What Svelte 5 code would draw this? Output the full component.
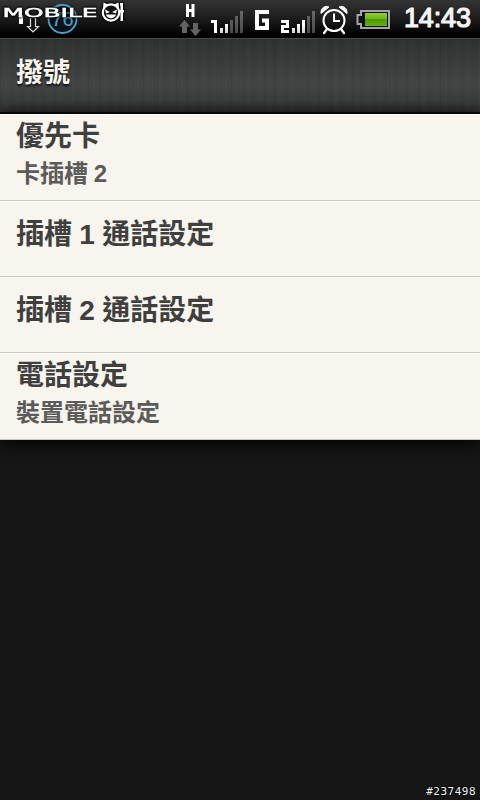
<script>
  const time = '14:43'
  const stamp = '#237498'

  const rows = [
    { title: '優先卡', summary: '卡插槽 2' },
    { title: '插槽 1 通話設定' },
    { title: '插槽 2 通話設定' },
    { title: '電話設定', summary: '裝置電話設定' },
  ]

  // level = how many of the five bars are lit
  const signals = {
    sim1: { slot: '1', level: 2, offset: 10 },
    sim2: { slot: '2', level: 3, offset: 12 },
  }
  const barHeights = [5, 9, 13, 17, 22]
</script>

{#snippet signal(s)}
  <svg class="signal" width="36" height="38" viewBox="0 0 36 38">
    {#if s.slot === '1'}
      <path d="M1 21.500H5.500V33" fill="none" stroke="#fff" stroke-width="3" />
    {:else}
      <path d="M1 21.500H7.500V26.500H2.500V31.500H9" fill="none" stroke="#fff" stroke-width="3" />
    {/if}
    {#each barHeights as h, i}
      <rect
        x={s.offset + i * 5} y={33 - h} width="3" height={h}
        fill={i < s.level ? 'url(#lit)' : 'url(#dim)'}
      />
    {/each}
  </svg>
{/snippet}

<div class="screen">
  <div class="statusbar">
    <svg class="notices" width="80" height="38" viewBox="0 0 80 38">
      <path d="M19 15h4v9h-4z" fill="#fff" />
      <path d="M30.500 18v8.500h-3l5.500 5.500 5.500-5.500h-3V18" fill="#111" stroke="#ddd" stroke-width="1.200" />
      <circle cx="62.500" cy="19" r="14" fill="#0a1217" stroke="#4ba3cf" stroke-width="1.800" />
      <text x="62.500" y="26" text-anchor="middle" class="badge">76</text>
    </svg>

    <svg class="data" width="24" height="38" viewBox="0 0 24 38">
      <path d="M9.500 4v13M15 4v13M9 10.500h6" stroke="#fff" stroke-width="3" />
      <path d="M6.500 20l5.500 6.500h-3V33H4v-6.500H1zM15 23h5v6.500h3L17.500 36 12 29.500h3z" fill="#646464" />
    </svg>

    {@render signal(signals.sim1)}

    <svg class="network" width="16" height="38" viewBox="0 0 16 38">
      <path d="M15 12H3V28H13V20.500H8" fill="none" stroke="#fff" stroke-width="4" />
    </svg>

    {@render signal(signals.sim2)}

    <svg class="alarm" width="28" height="38" viewBox="0 0 28 38" fill="none" stroke="#fff">
      <circle cx="14" cy="20.500" r="10.500" stroke-width="2" />
      <path d="M14 13.500V21h6" stroke-width="2" />
      <path d="M7 29l-3 4M21 29l3 4" stroke-width="2.200" stroke-linecap="round" />
      <path d="M1 13.500C.5 8 5 5 9 7zM27 13.500C27.500 8 23 5 19 7z" fill="#fff" stroke-width="1" />
    </svg>

    <svg class="battery" width="35" height="38" viewBox="0 0 35 38">
      <path d="M5 11h28v17H5v-4H1.500v-9H5z" fill="#111" stroke="#a5a5a5" stroke-width="2" />
      <path d="M9 13h22v13H9z" fill="url(#charge)" />
    </svg>

    <svg class="clock" width="70" height="38" viewBox="0 0 70 38">
      <text x="0" y="27" textLength="67" lengthAdjust="spacing">{time}</text>
    </svg>

    <svg class="defs" width="0" height="0">
      <defs>
        <linearGradient id="lit" gradientUnits="userSpaceOnUse" x1="0" y1="11" x2="0" y2="33">
          <stop offset="0.6" stop-color="#fff" />
          <stop offset="1" stop-color="#d0d0d0" />
        </linearGradient>
        <linearGradient id="dim" gradientUnits="userSpaceOnUse" x1="0" y1="11" x2="0" y2="33">
          <stop offset="0" stop-color="#686868" />
          <stop offset="1" stop-color="#4a4a4a" />
        </linearGradient>
        <linearGradient id="charge" x1="0" y1="0" x2="0" y2="1">
          <stop offset="0" stop-color="#8ccb31" />
          <stop offset="0.45" stop-color="#6fb81c" />
          <stop offset="0.5" stop-color="#4c9d05" />
          <stop offset="1" stop-color="#67b013" />
        </linearGradient>
      </defs>
    </svg>

    <svg class="watermark" width="128" height="26" viewBox="0 0 128 26">
      <text x="2.500" y="17" textLength="95" lengthAdjust="spacingAndGlyphs">MOBILE</text>
      <circle cx="111" cy="12.500" r="8.200" fill="#111" stroke="#fff" stroke-width="2.200" />
      <path d="M103 8.500l.5-6 4.500 2zM119 8.500l-.5-6-4.500 2z" fill="#fff" />
      <path d="M105 9.500l5 2.500-4 1.500zM117 9.500l-5 2.500 4 1.500z" fill="#fff" />
      <path d="M106 14.500h10c-1.200 5-8.800 5-10 0z" fill="#fff" />
      <path d="M120 3h3v7h1v2.500h-1V21h-2.500v-8.500H120V10h.5V5.500H120z" fill="#fff" />
    </svg>
  </div>

  <header>
    <h1>撥號</h1>
  </header>

  <ul class="list">
    {#each rows as row}
      <li class:double={row.summary}>
        <div class="title">{row.title}</div>
        {#if row.summary}<div class="summary">{row.summary}</div>{/if}
      </li>
    {/each}
  </ul>

  <div class="stamp">{stamp}</div>
</div>

<style>
  :global(body) {
    background: #161616;
  }
  .screen {
    position: relative;
    display: flex;
    flex-direction: column;
    width: 480px;
    height: 800px;
    overflow: hidden;
    background: #161616;
    font-family: "Liberation Sans", "Noto Sans CJK TC", sans-serif;
  }
  .statusbar {
    position: relative;
    display: flex;
    flex-shrink: 0;
    height: 38px;
    background: linear-gradient(#343434, #1b1b1b 50%, #000 94%);
  }
  .statusbar svg {
    display: block;
    flex-shrink: 0;
  }
  .badge {
    font: 20px "Liberation Sans", sans-serif;
    fill: #4ba3cf;
  }
  .data { margin-left: 98px; }
  .signal { margin-left: 8px; }
  .network { margin-left: 8px; }
  .network + .signal { margin-left: 10px; }
  .alarm { margin-left: 4px; }
  .battery { margin-left: 8px; }
  .clock { margin-left: 13px; }
  .clock text {
    font: 27px "Liberation Sans", sans-serif;
    fill: #f4f4f4;
    stroke: #f4f4f4;
    stroke-width: 1.2px;
    stroke-linejoin: round;
  }
  .statusbar .defs { position: absolute; }
  .watermark {
    position: absolute;
    left: 0;
    top: 0;
    filter: drop-shadow(0 0 1px #000) drop-shadow(0 0 1px #000);
  }
  .watermark text {
    font: 12.5px "DejaVu Sans", sans-serif;
    fill: #fff;
    stroke: #fff;
    stroke-width: .5px;
  }

  header {
    flex-shrink: 0;
    box-sizing: border-box;
    height: 76px;
    padding: 14px 16px 0;
    border-top: 1px solid #484848;
    border-bottom: 2px solid #0c0c0c;
    background:
      repeating-linear-gradient(90deg, rgba(0, 0, 0, .05) 0 1px, transparent 1px 5px, rgba(255, 255, 255, .012) 5px 7px, transparent 7px 11px),
      repeating-linear-gradient(90deg, transparent 0 12px, rgba(0, 0, 0, .04) 12px 14px, transparent 14px 29px),
      linear-gradient(#303131, #434444 62%, #3b3c3c 85%, #303030);
  }
  h1 {
    margin: 0;
    font-size: 27px;
    font-weight: bold;
    line-height: 40px;
    color: #f7f5ee;
    text-shadow: 0 2px 2px #111;
  }

  .list {
    flex-shrink: 0;
    margin: 0;
    padding: 0;
    list-style: none;
    background: #f7f5ee;
    box-shadow: 0 2px 18px #000;
  }
  li {
    box-sizing: border-box;
    height: 76px;
    padding: 13px 16px 0;
    border-top: 1px solid #fdfcf8;
    border-bottom: 1px solid #c9c8c3;
  }
  li.double {
    height: 87px;
    padding-top: 2px;
  }
  .title {
    font-size: 28px;
    font-weight: bold;
    line-height: 40px;
    color: #3f403e;
    white-space: nowrap;
    word-spacing: -.5px;
  }
  .summary {
    font-size: 24px;
    font-weight: bold;
    line-height: 34px;
    color: #5b5b59;
    white-space: nowrap;
    word-spacing: -1px;
  }

  .stamp {
    position: absolute;
    right: 4px;
    bottom: 1px;
    font: 11px/14px "DejaVu Sans Mono", monospace;
    letter-spacing: .5px;
    color: #eee;
    text-shadow: 0 0 2px #000;
  }
</style>
